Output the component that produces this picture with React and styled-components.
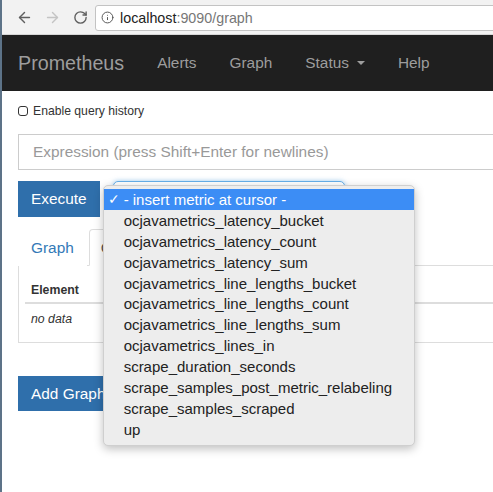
import React from "react";
import styled, { createGlobalStyle } from "styled-components";
import { ArrowLeft, ArrowRight, RotateCw, Info } from "lucide-react";

const GlobalStyle = createGlobalStyle`
  html, body {
    margin: 0;
    padding: 0;
    background: #fff;
  }
  body {
    font-family: "Liberation Sans", Arial, Helvetica, sans-serif;
    color: #333;
  }
`;

const Frame = styled.div`
  min-height: 492px;
  border-left: 2px solid #5d7388;
  overflow: hidden;
`;

const BrowserBar = styled.div`
  height: 35px;
  background: #f2f2f2;
  border-bottom: 1px solid #d6d6d6;
  box-sizing: border-box;
  display: flex;
  align-items: center;
  padding-left: 8px;
`;

const ChromeButton = styled.span`
  width: 28px;
  height: 20px;
  display: flex;
  align-items: center;
  justify-content: center;
  color: ${(p) => (p.$disabled ? "#c4c4c4" : "#5f5f5f")};
`;

const UrlBox = styled.div`
  margin-left: 1px;
  height: 26px;
  flex: 1;
  margin-right: -10px;
  box-sizing: border-box;
  background: #fff;
  border: 1px solid #c3c3c3;
  border-radius: 3px;
  display: flex;
  align-items: center;
  padding-left: 5px;
  gap: 6px;
  font-size: 14.3px;
  color: #222;
  margin-top: 1px;
`;

const UrlRest = styled.span`
  color: #777;
`;

const Navbar = styled.div`
  height: 56px;
  background: #1f1f1f;
  display: flex;
  align-items: center;
  padding-left: 16px;
`;

const Brand = styled.span`
  font-size: 19.7px;
  color: #9d9d9d;
  padding-right: 16.5px;
`;

const NavLink = styled.span`
  font-size: 15.4px;
  color: #9d9d9d;
  padding: 0 16.5px;
  display: flex;
  align-items: center;
`;

const Caret = styled.span`
  display: inline-block;
  margin-left: 8px;
  width: 0;
  height: 0;
  border-top: 4.5px solid #9d9d9d;
  border-left: 4px solid transparent;
  border-right: 4px solid transparent;
`;

const Content = styled.div`
  padding: 0 0 0 16px;
  margin-right: -60px;
`;

const HistoryRow = styled.label`
  display: flex;
  align-items: center;
  height: 20px;
  margin-top: 10px;
  font-size: 12.2px;
  color: #333;
`;

const CheckBox = styled.span`
  width: 8px;
  height: 8px;
  border: 1.8px solid #333;
  border-radius: 3px;
  margin-right: 5px;
`;

const Expression = styled.div`
  margin-top: 13px;
  height: 36px;
  box-sizing: border-box;
  border: 1px solid #ccc;
  display: flex;
  align-items: center;
  padding-left: 14px;
  font-size: 15.4px;
  color: #999;
`;

const ControlRow = styled.div`
  margin-top: 11px;
  display: flex;
  align-items: flex-start;
  gap: 13px;
`;

const PrimaryButton = styled.div`
  background: #2f6fab;
  color: #fff;
  font-size: 15.4px;
  height: ${(p) => p.$h || 36}px;
  display: flex;
  align-items: center;
  padding: 0 13px;
  width: fit-content;
  box-sizing: border-box;
`;

const SelectWrap = styled.div`
  position: relative;
  width: 232px;
  height: 36px;
`;

const SelectBox = styled.div`
  height: 36px;
  box-sizing: border-box;
  border: 1px solid #66afe9;
  border-radius: 5px;
  box-shadow: 0 0 5px rgba(102, 175, 233, 0.6);
  background: #fff;
`;

const Menu = styled.div`
  position: absolute;
  left: -10px;
  top: 4px;
  width: 312px;
  box-sizing: border-box;
  padding: 3px 0 5px;
  background: #ededed;
  border: 1px solid #cfcfcf;
  border-radius: 5px;
  box-shadow: 0 3px 10px rgba(0, 0, 0, 0.25);
  z-index: 10;
`;

const MenuItem = styled.div`
  height: 20.9px;
  line-height: 19px;
  display: flex;
  align-items: center;
  font-size: 15px;
  color: ${(p) => (p.$active ? "#fff" : "#222")};
  background: ${(p) => (p.$active ? "#3c8df5" : "transparent")};
`;

const Check = styled.span`
  width: 20px;
  padding-left: 4px;
  box-sizing: border-box;
  font-size: 14px;
`;

const Tabs = styled.div`
  margin-top: 12px;
  display: flex;
  border-bottom: 1px solid #ddd;
  height: 36px;
`;

const Tab = styled.div`
  height: 37px;
  box-sizing: border-box;
  margin-right: 2px;
  padding: 0 ${(p) => (p.$active ? 11 : 12)}px;
  display: flex;
  align-items: center;
  font-size: 15.4px;
  color: ${(p) => (p.$active ? "#555" : "#337ab7")};
  background: #fff;
  border: 1px solid ${(p) => (p.$active ? "#ddd" : "transparent")};
  border-bottom-color: ${(p) => (p.$active ? "#fff" : "transparent")};
  border-radius: 4px 4px 0 0;
`;

const Panel = styled.div`
  border: 1px solid #ddd;
  border-top: none;
  padding: 12px 6px 8px;
`;

const Table = styled.table`
  width: 100%;
  border-collapse: collapse;
  font-size: 12.3px;
  line-height: 20px;
`;

const HeadCell = styled.th`
  text-align: left;
  padding: 2px 6px;
  border-bottom: 2px solid #ddd;
  color: #333;
`;

const Cell = styled.td`
  padding: 5px 6px;
  font-style: italic;
  color: #333;
`;

const AddRow = styled.div`
  margin-top: 33px;
`;

const metrics = [
  "ocjavametrics_latency_bucket",
  "ocjavametrics_latency_count",
  "ocjavametrics_latency_sum",
  "ocjavametrics_line_lengths_bucket",
  "ocjavametrics_line_lengths_count",
  "ocjavametrics_line_lengths_sum",
  "ocjavametrics_lines_in",
  "scrape_duration_seconds",
  "scrape_samples_post_metric_relabeling",
  "scrape_samples_scraped",
  "up",
];

export default function App() {
  return (
    <Frame>
      <GlobalStyle />
      <BrowserBar>
        <ChromeButton><ArrowLeft size={17} strokeWidth={2} /></ChromeButton>
        <ChromeButton $disabled><ArrowRight size={17} strokeWidth={2} /></ChromeButton>
        <ChromeButton><RotateCw size={15} strokeWidth={2.2} /></ChromeButton>
        <UrlBox>
          <Info size={13} strokeWidth={1.8} color="#555" />
          <span>
            localhost<UrlRest>:9090/graph</UrlRest>
          </span>
        </UrlBox>
      </BrowserBar>
      <Navbar>
        <Brand>Prometheus</Brand>
        <NavLink>Alerts</NavLink>
        <NavLink>Graph</NavLink>
        <NavLink>Status<Caret /></NavLink>
        <NavLink>Help</NavLink>
      </Navbar>
      <Content>
        <HistoryRow>
          <CheckBox />
          Enable query history
        </HistoryRow>
        <Expression>Expression (press Shift+Enter for newlines)</Expression>
        <ControlRow>
          <PrimaryButton>Execute</PrimaryButton>
          <SelectWrap>
            <SelectBox />
            <Menu>
              <MenuItem $active>
                <Check>✓</Check>- insert metric at cursor -
              </MenuItem>
              {metrics.map((m) => (
                <MenuItem key={m}>
                  <Check />
                  {m}
                </MenuItem>
              ))}
            </Menu>
          </SelectWrap>
        </ControlRow>
        <Tabs>
          <Tab>Graph</Tab>
          <Tab $active>Console</Tab>
        </Tabs>
        <Panel>
          <Table>
            <thead>
              <tr>
                <HeadCell>Element</HeadCell>
              </tr>
            </thead>
            <tbody>
              <tr>
                <Cell>no data</Cell>
              </tr>
            </tbody>
          </Table>
        </Panel>
        <AddRow>
          <PrimaryButton $h={35}>Add Graph</PrimaryButton>
        </AddRow>
      </Content>
    </Frame>
  );
}
